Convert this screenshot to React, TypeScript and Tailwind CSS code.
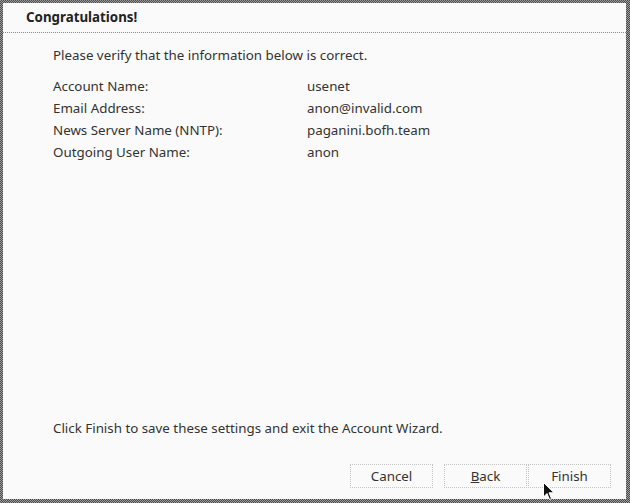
const rows: [string, string][] = [
  ["Account Name:", "usenet"],
  ["Email Address:", "anon@invalid.com"],
  ["News Server Name (NNTP):", "paganini.bofh.team"],
  ["Outgoing User Name:", "anon"],
];

function WizardButton({ children, className = "" }: { children: React.ReactNode; className?: string }) {
  return (
    <button
      className={`h-[24px] w-[83px] border border-dotted border-[#c4c4c4] bg-[#fafafa] pt-[2px] text-[13.33px] text-[#333] ${className}`}
    >
      {children}
    </button>
  );
}

export default function App() {
  return (
    <div
      className="relative w-[630px] h-[503px] pt-[3px] pl-[3px] pr-[4px] pb-[4px] bg-[repeating-conic-gradient(#4c4c4c_0_25%,#9c9c9c_0_50%)] bg-[length:2px_2px]"
      style={{ fontFamily: '"Noto Sans", "Open Sans", sans-serif' }}
    >
      <div className="flex h-full flex-col bg-[#fafafa] text-[13.33px] text-[#333]">
        <header className="flex h-[30px] items-center border-b border-dotted border-[#8a8a8a] pl-[23px]">
          <h1 className="text-[13.33px] font-bold text-[#222]">Congratulations!</h1>
        </header>

        <div className="flex flex-1 flex-col pl-[50px] pt-[11px] leading-[22px]">
          <p>Please verify that the information below is correct.</p>
          <div className="mt-[9px] flex flex-col">
            {rows.map(([label, value]) => (
              <div key={label} className="flex">
                <span className="w-[254px]">{label}</span>
                <span>{value}</span>
              </div>
            ))}
          </div>
          <p className="mt-auto mb-[25px]">Click Finish to save these settings and exit the Account Wizard.</p>
        </div>

        <div className="flex justify-end pr-[15px] pb-[11px]">
          <WizardButton className="w-[82px]">Cancel</WizardButton>
          <WizardButton className="ml-[11px]">
            <span className="underline">B</span>ack
          </WizardButton>
          <WizardButton className="ml-[1px]">Finish</WizardButton>
        </div>
      </div>

      {/* mouse pointer */}
      <svg className="absolute left-[543px] top-[482px]" width="12" height="19" viewBox="0 0 12 19">
        <path d="M0.5 0.5 L0.5 15 L4 11.5 L6.5 17.5 L8.5 16.5 L6 10.8 L11 10.8 Z" fill="#111" stroke="#fff" strokeWidth="1" />
      </svg>
    </div>
  );
}
